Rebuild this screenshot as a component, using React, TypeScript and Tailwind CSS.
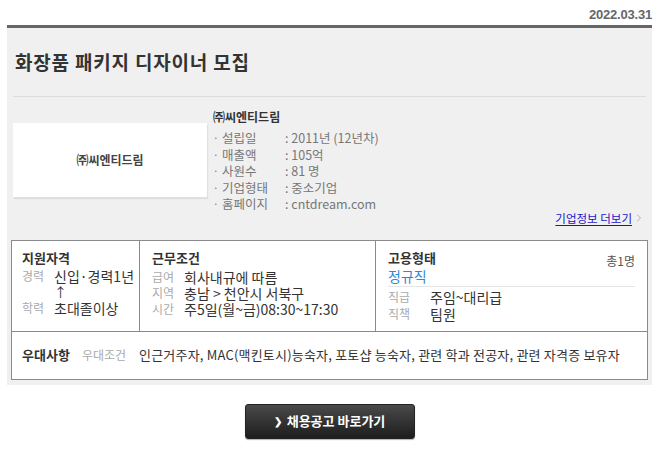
import { ChevronRight } from "lucide-react";

const FONT = "font-['Noto_Sans_CJK_KR','Noto_Sans',sans-serif]";

const companyInfo = [
  ["설립일", "2011년 (12년차)"],
  ["매출액", "105억"],
  ["사원수", "81 명"],
  ["기업형태", "중소기업"],
  ["홈페이지", "cntdream.com"],
];

function Row({
  label,
  labelW = "w-[32px]",
  children,
}: {
  label: string;
  labelW?: string;
  children: React.ReactNode;
}) {
  return (
    <div className="flex h-[16px] items-center whitespace-nowrap">
      <span className={`${labelW} shrink-0 text-[12px] text-[#aaa]`}>{label}</span>
      <span className="text-[14px] text-[#333]">{children}</span>
    </div>
  );
}

function Heading({ children }: { children: React.ReactNode }) {
  return <div className="h-[16px] text-[13px] font-bold leading-[16px] text-[#333]">{children}</div>;
}

export default function App() {
  return (
    <div className={`${FONT} w-[658px] bg-white pb-8 pl-[7px] pr-[6px] leading-[16px]`}>
      <div className="flex h-[25px] items-center justify-end pt-[5px] font-['Liberation_Sans',sans-serif] text-[13px] font-bold tracking-[-0.2px] text-[#666]">
        2022.03.31
      </div>
      <div className="border-t-[3px] border-[#666] bg-[#f0f0f0] px-[6px] pb-[5px]">
        <div className="flex h-[69px] items-center border-b border-[#dcdcdc] pl-[2px] text-[19px] font-bold leading-[22px] tracking-[0.8px] text-[#333]">
          화장품 패키지 디자이너 모집
        </div>

        <div className="flex pt-[13px]">
          <div className="mt-[13px] flex h-[74px] w-[194px] items-center justify-center bg-white text-[12px] font-bold text-[#444] shadow-[1px_2px_1px_rgba(0,0,0,0.07)]">
            ㈜씨엔티드림
          </div>
          <div className="ml-[6px]">
            <div className="h-[14px] text-[12px] font-bold leading-[14px] text-[#333]">㈜씨엔티드림</div>
            <div className="mt-[6px] flex flex-col">
              {companyInfo.map(([k, v]) => (
                <div key={k} className="flex h-[16.5px] items-center text-[12.5px] text-[#777]">
                  <span className="w-[9px] text-[10px]">·</span>
                  <span className="w-[63px]">{k}</span>
                  <span>: {v}</span>
                </div>
              ))}
            </div>
          </div>
        </div>

        <div className="mt-[-2px] flex h-[14px] items-center justify-end pr-[1px] text-[11.5px] text-[#1a14c8]">
          <span className="underline underline-offset-2">기업정보 더보기</span>
          <ChevronRight className="ml-[1px] h-3 w-3 text-[#999]" strokeWidth={1.5} />
        </div>

        <div className="mx-[-2px] mt-[15px] border border-[#8a8a8a] bg-white">
          <div className="flex h-[90px]">
            <div className="w-[128px] border-r border-[#8a8a8a] pl-[10px] pt-[9px]">
              <Heading>지원자격</Heading>
              <div className="mt-[2px] flex flex-col">
                <Row label="경력">신입·경력1년</Row>
                <div className="h-[16px] pl-[32px] text-[13px] text-[#333]">↑</div>
                <Row label="학력">초대졸이상</Row>
              </div>
            </div>
            <div className="w-[236px] border-r border-[#8a8a8a] pl-[12px] pt-[9px]">
              <Heading>근무조건</Heading>
              <div className="mt-[3px] flex flex-col">
                <Row label="급여">회사내규에 따름</Row>
                <Row label="지역">충남 &gt; 천안시 서북구</Row>
                <Row label="시간">주5일(월~금)08:30~17:30</Row>
              </div>
            </div>
            <div className="flex-1 pl-[12px] pr-[12px] pt-[9px]">
              <div className="flex h-[16px] justify-between">
                <Heading>고용형태</Heading>
                <div className="pt-[3px] text-[12px] text-[#555]">총1명</div>
              </div>
              <div className="mt-[2px] h-[19px] border-b border-[#e5e5e5] text-[14px] text-[#2a8ad4]">
                정규직
              </div>
              <div className="mt-[2px] flex flex-col gap-[1px]">
                <Row label="직급" labelW="w-[42px]">주임~대리급</Row>
                <Row label="직책" labelW="w-[42px]">팀원</Row>
              </div>
            </div>
          </div>
          <div className="flex h-[48px] items-center whitespace-nowrap border-t border-[#8a8a8a] pl-[10px]">
            <span className="w-[60px] text-[13px] font-bold text-[#333]">우대사항</span>
            <span className="w-[57px] text-[12px] text-[#aaa]">우대조건</span>
            <span className="text-[13px] tracking-[0.2px] text-[#333]">
              인근거주자, MAC(맥킨토시)능숙자, 포토샵 능숙자, 관련 학과 전공자, 관련 자격증 보유자
            </span>
          </div>
        </div>
      </div>

      <div className="flex justify-center pt-[19px]">
        <button
          type="button"
          className="flex h-[35px] w-[170px] items-center justify-center rounded-[3px] border border-[#222] bg-gradient-to-b from-[#4a4a4a] to-[#1e1e1e] text-[13px] font-bold text-white shadow-[0_1px_1px_rgba(0,0,0,0.3)]"
        >
          <span className="mr-[5px] text-[10px]">❯</span>채용공고 바로가기
        </button>
      </div>
    </div>
  );
}
